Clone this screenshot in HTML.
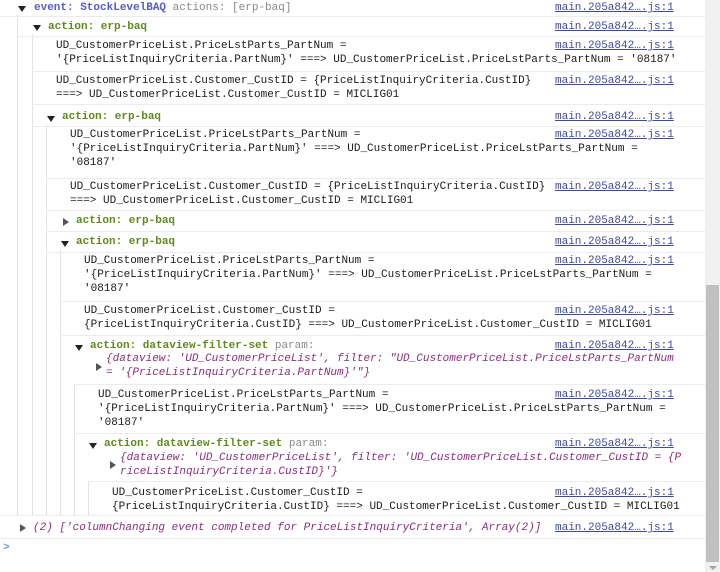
<!DOCTYPE html>
<html><head><meta charset="utf-8"><style>
body{margin:0;width:720px;height:572px;background:#fff;position:relative;overflow:hidden;font-family:"Liberation Mono",monospace;font-size:11px;color:#1a1a1a}
.t{position:absolute;white-space:pre;line-height:14px}
.a{color:#5f8a1c;font-weight:bold}.g{color:#888}.ev{color:#5a5ad0;font-weight:bold}.p{color:#8b2f7f;font-style:italic}
.l{position:absolute;left:555px;color:#3e4a9e;text-decoration:underline;white-space:pre;line-height:14px}
.v{position:absolute;width:1px;background:#e2e2e2}
.h{position:absolute;height:1px;background:#ececec;right:15px}
.dn{position:absolute;width:0;height:0;border-left:4px solid transparent;border-right:4px solid transparent;border-top:6px solid #222}
.rt{position:absolute;width:0;height:0;border-top:4px solid transparent;border-bottom:4px solid transparent;border-left:6px solid #555}
</style></head><body>
<div class="v" style="left:17px;top:15px;height:500px"></div>
<div class="v" style="left:32px;top:34px;height:481px"></div>
<div class="v" style="left:46px;top:125px;height:390px"></div>
<div class="v" style="left:60px;top:250px;height:265px"></div>
<div class="v" style="left:74px;top:384px;height:131px"></div>
<div class="v" style="left:88px;top:481px;height:34px"></div>

<div class="h" style="left:0;top:16px"></div>
<div class="h" style="left:17px;top:36px"></div>
<div class="h" style="left:32px;top:71px"></div>
<div class="h" style="left:32px;top:104px"></div>
<div class="h" style="left:32px;top:126px"></div>
<div class="h" style="left:46px;top:178px"></div>
<div class="h" style="left:46px;top:210px"></div>
<div class="h" style="left:46px;top:231px"></div>
<div class="h" style="left:46px;top:252px"></div>
<div class="h" style="left:60px;top:301px"></div>
<div class="h" style="left:60px;top:335px"></div>
<div class="h" style="left:74px;top:384px"></div>
<div class="h" style="left:74px;top:433px"></div>
<div class="h" style="left:88px;top:481px"></div>
<div class="h" style="left:0;top:515px"></div>
<div class="h" style="left:0;top:538px"></div>

<div class="dn" style="left:18px;top:6px"></div>
<div class="t" style="left:34px;top:1px"><span class="ev">event: StockLevelBAQ</span> <span class="g">actions: [erp-baq]</span></div>
<div class="l" style="top:1px">main.205a842….js:1</div>

<div class="dn" style="left:33px;top:25px"></div>
<div class="t a" style="left:48px;top:20px">action: erp-baq</div>
<div class="l" style="top:20px">main.205a842….js:1</div>

<div class="t" style="left:56px;top:39px">UD_CustomerPriceList.PriceLstParts_PartNum =
'{PriceListInquiryCriteria.PartNum}' ===> UD_CustomerPriceList.PriceLstParts_PartNum = '08187'</div>
<div class="l" style="top:39px">main.205a842….js:1</div>

<div class="t" style="left:56px;top:74px">UD_CustomerPriceList.Customer_CustID = {PriceListInquiryCriteria.CustID}
===> UD_CustomerPriceList.Customer_CustID = MICLIG01</div>
<div class="l" style="top:74px">main.205a842….js:1</div>

<div class="dn" style="left:47px;top:116px"></div>
<div class="t a" style="left:62px;top:110px">action: erp-baq</div>
<div class="l" style="top:110px">main.205a842….js:1</div>

<div class="t" style="left:70px;top:128px">UD_CustomerPriceList.PriceLstParts_PartNum =
'{PriceListInquiryCriteria.PartNum}' ===> UD_CustomerPriceList.PriceLstParts_PartNum =
'08187'</div>
<div class="l" style="top:128px">main.205a842….js:1</div>

<div class="t" style="left:70px;top:180px">UD_CustomerPriceList.Customer_CustID = {PriceListInquiryCriteria.CustID}
===> UD_CustomerPriceList.Customer_CustID = MICLIG01</div>
<div class="l" style="top:180px">main.205a842….js:1</div>

<div class="rt" style="left:63px;top:218px"></div>
<div class="t a" style="left:76px;top:214px">action: erp-baq</div>
<div class="l" style="top:214px">main.205a842….js:1</div>

<div class="dn" style="left:61px;top:241px"></div>
<div class="t a" style="left:76px;top:235px">action: erp-baq</div>
<div class="l" style="top:235px">main.205a842….js:1</div>

<div class="t" style="left:84px;top:254px">UD_CustomerPriceList.PriceLstParts_PartNum =
'{PriceListInquiryCriteria.PartNum}' ===> UD_CustomerPriceList.PriceLstParts_PartNum =
'08187'</div>
<div class="l" style="top:254px">main.205a842….js:1</div>

<div class="t" style="left:84px;top:304px">UD_CustomerPriceList.Customer_CustID =
{PriceListInquiryCriteria.CustID} ===> UD_CustomerPriceList.Customer_CustID = MICLIG01</div>
<div class="l" style="top:304px">main.205a842….js:1</div>

<div class="dn" style="left:75px;top:345px"></div>
<div class="t" style="left:90px;top:339px"><span class="a">action: dataview-filter-set</span> <span class="g">param:</span></div>
<div class="l" style="top:339px">main.205a842….js:1</div>
<div class="rt" style="left:96px;top:363px"></div>
<div class="t p" style="left:106px;top:352px">{dataview: 'UD_CustomerPriceList', filter: "UD_CustomerPriceList.PriceLstParts_PartNum
= '{PriceListInquiryCriteria.PartNum}'"}</div>

<div class="t" style="left:98px;top:388px">UD_CustomerPriceList.PriceLstParts_PartNum =
'{PriceListInquiryCriteria.PartNum}' ===> UD_CustomerPriceList.PriceLstParts_PartNum =
'08187'</div>
<div class="l" style="top:388px">main.205a842….js:1</div>

<div class="dn" style="left:89px;top:443px"></div>
<div class="t" style="left:104px;top:437px"><span class="a">action: dataview-filter-set</span> <span class="g">param:</span></div>
<div class="l" style="top:437px">main.205a842….js:1</div>
<div class="rt" style="left:110px;top:461px"></div>
<div class="t p" style="left:120px;top:451px">{dataview: 'UD_CustomerPriceList', filter: 'UD_CustomerPriceList.Customer_CustID = {P
riceListInquiryCriteria.CustID}'}</div>

<div class="t" style="left:112px;top:486px">UD_CustomerPriceList.Customer_CustID =
{PriceListInquiryCriteria.CustID} ===> UD_CustomerPriceList.Customer_CustID = MICLIG01</div>
<div class="l" style="top:486px">main.205a842….js:1</div>

<div class="rt" style="left:20px;top:524px"></div>
<div class="t p" style="left:33px;top:521px">(2) ['columnChanging event completed for PriceListInquiryCriteria', Array(2)]</div>
<div class="l" style="top:521px">main.205a842….js:1</div>

<div class="t" style="left:3px;top:541px;color:#6a9be0;font-weight:bold">&gt;</div>

<div style="position:absolute;left:705px;top:0;width:15px;height:572px;background:#f1f1f1"></div>
<div style="position:absolute;left:706px;top:285px;width:13px;height:277px;background:#c1c1c1"></div>
<div style="position:absolute;left:709px;top:566px;width:0;height:0;border-left:4px solid transparent;border-right:4px solid transparent;border-top:4px solid #a3a3a3"></div>
</body></html>
